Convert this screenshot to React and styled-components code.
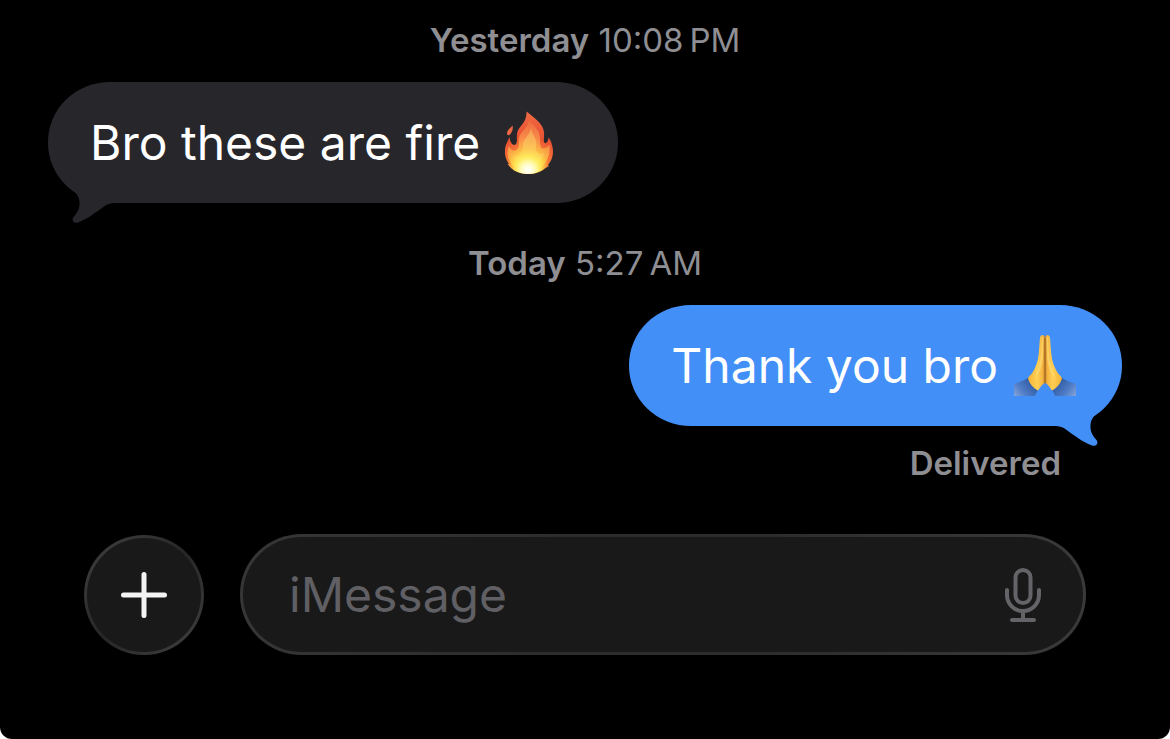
import React from "react";
import styled, { createGlobalStyle } from "styled-components";

const GlobalStyle = createGlobalStyle`
  *, *::before, *::after { box-sizing: border-box; }
  body {
    margin: 0;
    background: #fff;
    font-family: Inter, "Liberation Sans", sans-serif;
  }
`;

const Screen = styled.main`
  display: flex;
  flex-direction: column;
  min-height: 100vh;
  padding-top: 20px;
  background: #000;
  border-radius: 0 0 12px 12px;
`;

const Thread = styled.section`
  display: flex;
  flex-direction: column;
  padding: 0 48px;
`;

const Timestamp = styled.p`
  margin: 0 0 22px;
  text-align: center;
  font-size: 33px;
  line-height: 40px;
  font-weight: 400;
  color: #8e8e93;
`;

const Day = styled.span`
  font-weight: 600;
`;

const Bubble = styled.div`
  position: relative;
  display: flex;
  align-items: center;
  align-self: ${(p) => (p.$sent ? "flex-end" : "flex-start")};
  gap: ${(p) => (p.$sent ? 16 : 24)}px;
  height: 121px;
  margin-bottom: ${(p) => (p.$sent ? 17 : 40)}px;
  padding: 0 ${(p) => (p.$sent ? 46 : 64)}px 0 42px;
  border-radius: 62px / 60px;
  background: ${(p) => (p.$sent ? "#428ff8" : "#27262b")};
  color: ${(p) => (p.$sent ? "#428ff8" : "#27262b")};
`;

const BubbleText = styled.span`
  font-size: 48px;
  line-height: 60px;
  color: #fff;
  white-space: nowrap;
`;

const TailShape = styled.svg`
  position: absolute;
  bottom: -21px;
  ${(p) => (p.$sent ? "right: 0; transform: scaleX(-1);" : "left: 0;")}
`;

const Receipt = styled.p`
  margin: 0 0 51px;
  padding-right: 61px;
  align-self: flex-end;
  font-size: 33px;
  line-height: 40px;
  font-weight: 600;
  color: #8e8e93;
`;

const Composer = styled.form`
  display: flex;
  align-items: center;
  gap: 36px;
  padding: 0 84px;
`;

const AddButton = styled.button`
  display: grid;
  place-items: center;
  flex: none;
  width: 120px;
  height: 120px;
  padding: 0;
  border: 3px solid transparent;
  border-radius: 50%;
  background:
    linear-gradient(#191919, #191919) padding-box,
    linear-gradient(135deg, #3c3c3c 10%, #262626 50%, #3c3c3c 90%) border-box;
`;

const Field = styled.div`
  display: flex;
  align-items: center;
  flex: 1;
  min-width: 0;
  height: 121px;
  padding: 0 42px 0 46px;
  border: 3px solid transparent;
  border-radius: 62px / 60px;
  background:
    linear-gradient(#191919, #191919) padding-box,
    linear-gradient(100deg, #363636, #2c2c2c 40%, #2c2c2c 60%, #3a3a3a) border-box;
`;

const MessageInput = styled.input`
  flex: 1;
  min-width: 0;
  padding: 0;
  border: 0;
  outline: 0;
  background: transparent;
  font-family: inherit;
  font-size: 48px;
  line-height: 60px;
  color: #fff;
  &::placeholder { color: #5f5f64; opacity: 1; }
`;

const MicButton = styled.button`
  display: flex;
  padding: 0;
  border: 0;
  background: none;
  color: #646468;
`;

const Tail = ({ sent }) => (
  <TailShape $sent={sent} width="72" height="54" viewBox="0 0 72 54" aria-hidden="true">
    <path
      fill="currentColor"
      d="M21 16C28 22 31 26 31.500 32C32 39 29 43 25.500 47C23 50.500 26 54 30 52.500C40 48.500 47 43 56 36.500C60 33.800 62 33 68 33L68 8Z"
    />
  </TailShape>
);

const FireIcon = () => (
  <svg width="50" height="64" viewBox="0 0 50 64" role="img" aria-label="fire">
    <defs>
      <radialGradient id="fireOuter" gradientUnits="userSpaceOnUse" cx="24" cy="58" r="56">
        <stop offset="0" stopColor="#ffc03a" />
        <stop offset="0.350" stopColor="#f98238" />
        <stop offset="0.600" stopColor="#ea5233" />
        <stop offset="1" stopColor="#f06a42" />
      </radialGradient>
      <radialGradient id="fireMid" gradientUnits="userSpaceOnUse" cx="24" cy="58" r="48">
        <stop offset="0" stopColor="#fff34a" />
        <stop offset="0.350" stopColor="#ffc545" />
        <stop offset="0.650" stopColor="#f88c48" />
        <stop offset="1" stopColor="#ee6a42" />
      </radialGradient>
      <radialGradient id="fireInner" gradientUnits="userSpaceOnUse" cx="24" cy="58" r="42">
        <stop offset="0" stopColor="#fff98a" />
        <stop offset="0.500" stopColor="#fdc85a" />
        <stop offset="1" stopColor="#f6a45a" />
      </radialGradient>
      <radialGradient id="fireCore" gradientUnits="userSpaceOnUse" cx="24" cy="59" r="22">
        <stop offset="0" stopColor="#ffffff" />
        <stop offset="0.300" stopColor="#fffcc0" />
        <stop offset="0.600" stopColor="#ffef5a" stopOpacity="0.800" />
        <stop offset="1" stopColor="#ffd13e" stopOpacity="0" />
      </radialGradient>
    </defs>
    <path
      fill="url(#fireOuter)"
      d="M22.500 0.500C29 6 39 12 40 21C40.500 26 39 30 40.500 32C43 33 44.500 29 44.500 26.500C47.500 30 49 36 49 41C49 46 47 50 44 54L45 55L41 57.500C37 61 31 63 24 63C16 63 10 60 6 56L3.500 53L5 53C2 49 0.500 44 1 39C1 34 4 30 5.500 26C6 30 7.500 34 10.500 34C14 33 12.500 28 13 23C13.500 15 23 13 22.500 0.500Z"
    />
    <path fill="#ec6845" d="M8.500 14.500C9.500 18 8 22 5.500 24C4 24.500 3 24 3 22.500C3 19 6.500 17 8.500 14.500Z" />
    <path
      fill="url(#fireMid)"
      d="M25 9C29 14 36 19 36 27C36 33 36 37 39 37.500C42 37.500 44 35 45.500 34C46.500 42 44 48 40 53C36 59 31 62 24 62C16 62 9 57 6 50C3 45 3 40 5 35C7 40 11 41 13.500 38C16 34 14 30 15.500 25C17.500 20 24 17 25 9Z"
    />
    <path
      fill="url(#fireInner)"
      fillOpacity="0.850"
      d="M27 17C28 24 34 28 32 36C31 41 35 45 40 42C38 51 32 59 24 61C16 59 11 53 9 45C16 46 19 41 19 35C18 28 26 25 27 17Z"
    />
    <ellipse cx="24" cy="50" rx="20" ry="13" fill="url(#fireCore)" />
  </svg>
);

const PrayIcon = () => (
  <svg width="62" height="64" viewBox="0 0 62 64" role="img" aria-label="folded hands">
    <defs>
      <linearGradient id="handSkin" x1="0" y1="0" x2="1" y2="0">
        <stop offset="0" stopColor="#f6b435" />
        <stop offset="0.550" stopColor="#ffcf55" />
        <stop offset="0.850" stopColor="#f5b540" />
        <stop offset="1" stopColor="#c8872c" />
      </linearGradient>
      <linearGradient id="handSleeve" gradientUnits="userSpaceOnUse" x1="0" y1="62" x2="20" y2="46">
        <stop offset="0" stopColor="#86a5da" />
        <stop offset="0.400" stopColor="#4f7cc6" />
        <stop offset="1" stopColor="#2c569f" />
      </linearGradient>
      <g id="prayHalf">
        <path fill="url(#handSleeve)" d="M0 50C5 48 10 47 15 43L25 55C23 57 22 59 21 62L0 62Z" />
        <path
          fill="url(#handSkin)"
          d="M31 3C30 0.500 26.500 0 26 4C25.500 9 25.300 14 24.700 20C24 27 22 32 20 36C18 40 16 41 14 44C15 49 19 54 24 56.500C26 54 28 50 31 49Z"
        />
        <path fill="#ffe07c" fillOpacity="0.550" d="M28 3C29.500 2 30 4 29.500 6L29 24C28 34 25 40 20 45C24 36 26.500 28 27 18Z" />
      </g>
    </defs>
    <use href="#prayHalf" />
    <use href="#prayHalf" transform="translate(62 0) scale(-1 1)" />
    <path d="M31 4V49" stroke="#9c611c" strokeWidth="1" strokeLinecap="round" />
  </svg>
);

const PlusIcon = () => (
  <svg width="48" height="48" viewBox="0 0 48 48" fill="none" stroke="#f4f4f4" strokeWidth="5" strokeLinecap="round" aria-hidden="true">
    <path d="M24 3.500V44.500M3.500 24H44.500" />
  </svg>
);

const MicIcon = () => (
  <svg width="36" height="54" viewBox="0 0 36 54" fill="none" stroke="currentColor" strokeWidth="4" strokeLinecap="round" aria-hidden="true">
    <rect x="10.500" y="2" width="15" height="33" rx="7.500" />
    <path d="M2 22V27A16 16 0 0 0 34 27V22M18 43V52M7 52H29" />
  </svg>
);

export default function App() {
  return (
    <>
      <GlobalStyle />
      <Screen>
        <Thread>
          <Timestamp>
            <Day>Yesterday</Day> 10:08{"\u2009"}PM
          </Timestamp>
          <Bubble>
            <Tail />
            <BubbleText>Bro these are fire</BubbleText>
            <FireIcon />
          </Bubble>
          <Timestamp>
            <Day>Today</Day> 5:27{"\u2009"}AM
          </Timestamp>
          <Bubble $sent>
            <Tail sent />
            <BubbleText>Thank you bro</BubbleText>
            <PrayIcon />
          </Bubble>
          <Receipt>Delivered</Receipt>
        </Thread>
        <Composer onSubmit={(e) => e.preventDefault()}>
          <AddButton type="button" aria-label="Add attachment">
            <PlusIcon />
          </AddButton>
          <Field>
            <MessageInput type="text" placeholder="iMessage" aria-label="iMessage" />
            <MicButton type="button" aria-label="Dictate">
              <MicIcon />
            </MicButton>
          </Field>
        </Composer>
      </Screen>
    </>
  );
}
